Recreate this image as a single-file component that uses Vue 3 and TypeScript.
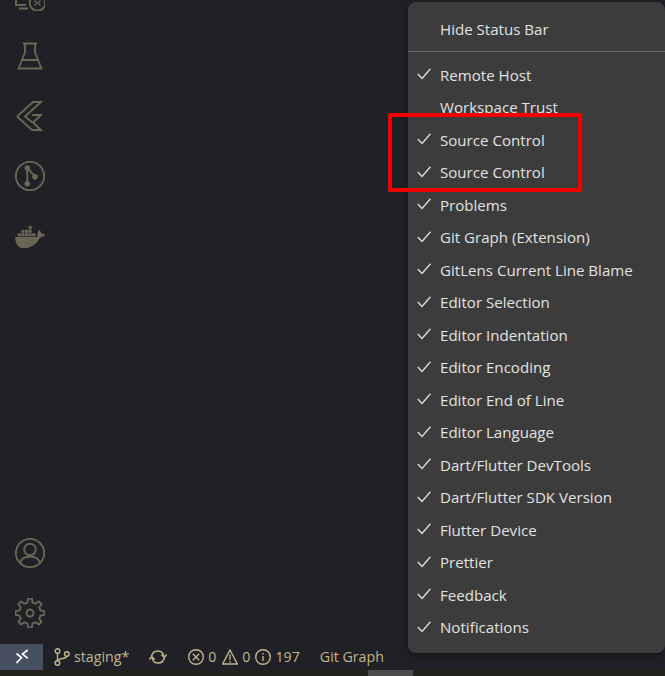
<template>
  <div class="window">
    <div class="main">
      <nav class="activity">
        <div class="group top-group">
          <div class="cell">
            <svg class="icon" viewBox="0 0 30 30">
              <path d="M1 15v9h10M4 27.500h9" />
              <circle cx="22.500" cy="22" r="7.800" />
              <path d="M19.500 19.500l2.500 2.500-2.500 2.500M25.500 19.500L23 22l2.500 2.500" class="thin" />
            </svg>
          </div>
          <div class="cell">
            <svg class="icon" viewBox="0 0 30 30">
              <path d="M8 2.500h14M10 2.500v9L3.500 27.500h23L20 11.500v-9M7 19h16" />
            </svg>
          </div>
          <div class="cell">
            <svg class="icon" viewBox="0 0 30 30">
              <path d="M2 15.500L18 1h8L10 15.500l7.500 6M17 14h9l-8 7.500 8 7.500h-9L2 15.500" />
            </svg>
          </div>
          <div class="cell">
            <svg class="icon" viewBox="0 0 30 30">
              <circle cx="15" cy="15" r="14.200" />
              <path d="M12.300 7v15.700M12.300 7L20 15.700" />
              <circle cx="12.300" cy="7" r="2.800" class="solid" />
              <circle cx="20" cy="15.700" r="2.800" class="solid" />
              <circle cx="12.300" cy="22.700" r="2.800" class="solid" />
            </svg>
          </div>
          <div class="cell">
            <svg class="icon" viewBox="0 0 30 30">
              <g class="solid">
                <rect x="13.500" y="5" width="3.200" height="3.300" />
                <rect x="6.300" y="8.800" width="3.200" height="3" />
                <rect x="9.900" y="8.800" width="3.200" height="3" />
                <rect x="13.500" y="8.800" width="3.200" height="3" />
                <rect x="2.700" y="12.300" width="3.200" height="3" />
                <rect x="6.300" y="12.300" width="3.200" height="3" />
                <rect x="9.900" y="12.300" width="3.200" height="3" />
                <rect x="13.500" y="12.300" width="3.200" height="3" />
                <rect x="17.100" y="12.300" width="3.200" height="3" />
                <path d="M0.200 16H22.500C21.800 13 22.800 10.500 24 9C25.500 10 26.200 11.500 26.200 12.700C27.500 12.200 29 12.600 30 13.500C28.700 15.800 26.700 16.500 25 16.500C22 23 16 27.300 9 27.300C3 27.300 0 22 0.200 16Z" />
              </g>
            </svg>
          </div>
        </div>
        <div class="group">
          <div class="cell">
            <svg class="icon" viewBox="0 0 30 30">
              <circle cx="15" cy="15" r="14.200" />
              <circle cx="15" cy="11.500" r="5.800" />
              <path d="M5 25.500C6 20.500 10 18.500 15 18.500S24 20.500 25 25.500" />
            </svg>
          </div>
          <div class="cell">
            <svg class="icon" viewBox="0 0 30 30">
              <path :d="gearPath" />
              <circle cx="15" cy="15" r="3.500" />
            </svg>
          </div>
        </div>
      </nav>
    </div>

    <footer class="status">
      <div class="remote">
        <svg viewBox="0 0 16 16" width="16" height="16">
          <path d="M2.500 4.500L7.500 8.500L2.500 14M13.800 1L8.500 5L13.800 9.300" />
        </svg>
      </div>
      <div class="item branch">
        <svg viewBox="0 0 16 18" width="16" height="18">
          <circle cx="3.500" cy="3" r="2.300" />
          <circle cx="3.500" cy="15" r="2.300" />
          <circle cx="12.800" cy="6" r="2.300" />
          <path d="M3.500 5.300v7.400M12.800 8.300C12.800 11 5 10 3.500 12.700" />
        </svg>
        <span>staging*</span>
      </div>
      <div class="item sync">
        <svg viewBox="0 0 18 16" width="18" height="16">
          <path d="M2.500 7.500C3.200 3.700 6 2 9 2c2.600 0 5.200 1.500 6 5.500M15.500 8.500c-.7 3.800-3.500 5.500-6.500 5.500-2.600 0-5.200-1.500-6-5.500" />
          <path d="M12.300 5.500L15.300 8.500L17.800 5.500M0.200 10.500L2.700 7.500L5.700 10.500" />
        </svg>
      </div>
      <div class="item problems">
        <svg viewBox="0 0 16 16" width="16" height="16">
          <circle cx="8" cy="8" r="7.300" />
          <path d="M4.800 4.800l6.400 6.400M11.200 4.800l-6.400 6.400" />
        </svg>
        <span>0</span>
        <svg class="warn" viewBox="0 0 16 16" width="16" height="16">
          <path d="M8 1L15.300 15H0.700Z" />
          <path d="M8 5.500v5.500M8 12v1.500" />
        </svg>
        <span>0</span>
        <svg class="info" viewBox="0 0 16 16" width="16" height="16">
          <circle cx="8" cy="8" r="7.300" />
          <path d="M8 7v5M8 4v1.500" />
        </svg>
        <span>197</span>
      </div>
      <div class="item graph"><span>Git Graph</span></div>
    </footer>

    <div class="strip"><div class="strip-thumb"></div></div>

    <section class="menu">
      <div class="row">
        <span class="check-slot"></span>
        <span class="label">Hide Status Bar</span>
      </div>
      <div class="separator"></div>
      <div v-for="(entry, i) in entries" :key="i" class="row">
        <span class="check-slot">
          <svg v-if="entry.checked" viewBox="0 0 14 14" width="14" height="14">
            <path d="M0.800 6L5 10.500L13.500 0.800" />
          </svg>
        </span>
        <span class="label">{{ entry.label }}</span>
      </div>
    </section>

    <div class="highlight"></div>
  </div>
</template>

<script setup lang="ts">
interface MenuEntry {
  label: string
  checked: boolean
}

const labels = [
  'Remote Host',
  'Workspace Trust',
  'Source Control',
  'Source Control',
  'Problems',
  'Git Graph (Extension)',
  'GitLens Current Line Blame',
  'Editor Selection',
  'Editor Indentation',
  'Editor Encoding',
  'Editor End of Line',
  'Editor Language',
  'Dart/Flutter DevTools',
  'Dart/Flutter SDK Version',
  'Flutter Device',
  'Prettier',
  'Feedback',
  'Notifications'
]

const entries: MenuEntry[] = labels.map((label) => ({
  label,
  checked: label !== 'Workspace Trust'
}))

// 8 toothed cog, outline only
const buildGear = (teeth: number, outer: number, inner: number): string => {
  const points: string[] = []
  const step = (Math.PI * 2) / teeth
  for (let i = 0; i < teeth; i++) {
    const a = i * step - Math.PI / 2
    const spots: [number, number][] = [
      [a - step * 0.3, inner],
      [a - step * 0.17, outer],
      [a + step * 0.17, outer],
      [a + step * 0.3, inner]
    ]
    for (const [angle, r] of spots) {
      points.push(`${(15 + Math.cos(angle) * r).toFixed(2)} ${(15 + Math.sin(angle) * r).toFixed(2)}`)
    }
  }
  return `M${points.join('L')}Z`
}

const gearPath = buildGear(8, 14.5, 10.8)
</script>

<style>
html,
body {
  margin: 0;
  background: #1f2126;
}
</style>

<style scoped>
.window {
  position: relative;
  width: 665px;
  height: 676px;
  overflow: hidden;
  display: flex;
  flex-direction: column;
  background: #1f2126;
  font-family: 'Open Sans', 'Noto Sans', sans-serif;
}

.main {
  height: 644px;
  flex: none;
  overflow: hidden;
}

.activity {
  width: 60px;
  height: 643px;
  display: flex;
  flex-direction: column;
  justify-content: space-between;
}

.top-group {
  margin-top: -34px;
}

.cell {
  width: 60px;
  height: 60px;
  display: flex;
  align-items: center;
  justify-content: center;
}

.icon {
  width: 30px;
  height: 30px;
  fill: none;
  stroke: #6b6653;
  stroke-width: 1.900;
}

.icon .solid {
  fill: #6b6653;
  stroke: none;
}

.icon .thin {
  stroke-width: 1.300;
}

.status {
  height: 26px;
  flex: none;
  display: flex;
  align-items: center;
  color: #c3b48c;
  font-size: 14.200px;
}

.status span {
  margin-top: -2px;
}

.status svg {
  fill: none;
  stroke: currentColor;
  stroke-width: 1.400;
  flex: none;
}

.remote {
  width: 43px;
  height: 26px;
  display: flex;
  align-items: center;
  justify-content: center;
  background: #465060;
  color: #ffffff;
}

.remote svg {
  stroke-width: 1.700;
}

.item {
  display: flex;
  align-items: center;
}

.branch {
  margin-left: 11px;
  gap: 4px;
}

.sync {
  margin-left: 20px;
}

.problems {
  margin-left: 21px;
  gap: 4px;
}

.warn {
  margin-left: 2px;
}

.info {
  margin-left: 1px;
}

.graph {
  margin-left: 20px;
}

.strip {
  height: 6px;
  flex: none;
  background: #22221f;
}

.strip-thumb {
  width: 45px;
  height: 6px;
  margin-left: 368px;
  background: #4b4b4b;
}

.menu {
  position: absolute;
  left: 408px;
  top: 2px;
  width: 257px;
  height: 651px;
  box-sizing: border-box;
  padding-top: 11.500px;
  border-radius: 8px;
  background: #3c3c3c;
  box-shadow: 0 2px 8px rgba(0, 0, 0, 0.36);
  color: #e2e2e2;
  font-size: 15.100px;
}

.row {
  height: 32.500px;
  display: flex;
  align-items: center;
}

.label {
  margin-top: -2px;
}

.check-slot {
  width: 32px;
  flex: none;
  display: flex;
  align-items: center;
  padding-left: 9px;
  box-sizing: border-box;
}

.check-slot svg {
  fill: none;
  stroke: #dcdcdc;
  stroke-width: 1.400;
  margin-bottom: 1px;
}

.separator {
  height: 1px;
  margin: 4.750px 0 7.750px;
  background: #636363;
}

.highlight {
  position: absolute;
  left: 388px;
  top: 113px;
  width: 194px;
  height: 79px;
  box-sizing: border-box;
  border: 4px solid #f40000;
  border-radius: 2px;
}
</style>
